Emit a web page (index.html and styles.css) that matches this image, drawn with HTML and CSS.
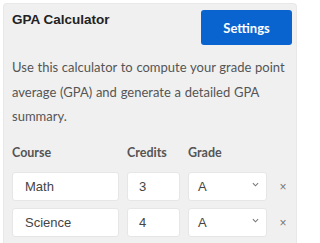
FILE: index.html
```html
<!DOCTYPE html>
<html>
<head>
<meta charset="utf-8">
<link rel="stylesheet" href="styles.css">
</head>
<body>
<div class="card">
  <div class="header">
    <h1 class="title">GPA Calculator</h1>
    <button class="btn">Settings</button>
  </div>
  <p class="desc">Use this calculator to compute your grade point average (GPA) and generate a detailed GPA summary.</p>
  <div class="grid">
    <div class="th">Course</div>
    <div class="th">Credits</div>
    <div class="th">Grade</div>
    <div></div>

    <div class="field text">Math</div>
    <div class="field num">3</div>
    <div class="field sel"><span>A</span><svg class="chev" viewBox="0 0 8 5" width="7" height="5"><path d="M1 1 L4 4 L7 1" fill="none" stroke="#777" stroke-width="1.2"/></svg></div>
    <div class="rm">×</div>

    <div class="field text">Science</div>
    <div class="field num">4</div>
    <div class="field sel"><span>A</span><svg class="chev" viewBox="0 0 8 5" width="7" height="5"><path d="M1 1 L4 4 L7 1" fill="none" stroke="#777" stroke-width="1.2"/></svg></div>
    <div class="rm">×</div>
  </div>
</div>
</body>
</html>
```

FILE: styles.css
```css
html, body {
  margin: 0;
  padding: 0;
  background: #ffffff;
}
body {
  padding: 3px 3px 0 3px;
  height: 243px;
  box-sizing: border-box;
  overflow: hidden;
}
.card {
  width: 294px;
  box-sizing: border-box;
  background: #f0f0f0;
  border: 1px solid #e8e8e8;
  border-bottom: none;
  border-radius: 4px 4px 0 0;
  padding: 6px 4px 6px 8px;
}
.header {
  display: flex;
  justify-content: space-between;
  align-items: flex-start;
}
.title {
  margin: 2px 0 0 0;
  font-family: "Liberation Sans", Arial, sans-serif;
  font-weight: bold;
  font-size: 13.5px;
  color: #222;
  line-height: 16px;
}
.btn {
  width: 91px;
  height: 35px;
  border: none;
  border-radius: 3px;
  background: #0a64cf;
  color: #ffffff;
  font-family: Lato, sans-serif;
  font-weight: bold;
  font-size: 13px;
  padding: 0;
  margin-top: 0;
}
.desc {
  margin: 10px 0 0 0;
  font-family: Lato, sans-serif;
  font-size: 13px;
  word-spacing: 0.4px;
  line-height: 24.5px;
  color: #555;
}
.grid {
  display: grid;
  grid-template-columns: 107px 53px 79px 16px;
  column-gap: 8px;
  row-gap: 7px;
  margin-top: 15px;
}
.th {
  font-family: Lato, sans-serif;
  font-weight: bold;
  font-size: 12.5px;
  color: #555;
  line-height: 17px;
  margin-bottom: 4px;
}
.field {
  height: 29px;
  box-sizing: border-box;
  background: #ffffff;
  border: 1px solid #e6e6e6;
  border-radius: 3px;
  font-family: "Liberation Sans", Arial, sans-serif;
  font-size: 13px;
  color: #444;
  display: flex;
  align-items: center;
}
.text {
  padding-left: 12px;
}
.num {
  padding-left: 11px;
}
.sel {
  padding: 0 7px 0 9px;
  justify-content: space-between;
}
.chev {
  display: block;
  margin-top: -3px;
}
.rm {
  display: flex;
  align-items: center;
  justify-content: center;
  font-family: "Liberation Sans", Arial, sans-serif;
  font-size: 12px;
  color: #777;
  padding-top: 2px;
}
```
